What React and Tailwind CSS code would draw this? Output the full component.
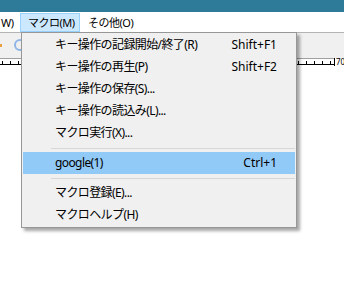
import React from "react";

const items = [
  { label: "キー操作の記録開始/終了(R)", key: "Shift+F1" },
  { label: "キー操作の再生(P)", key: "Shift+F2" },
  { label: "キー操作の保存(S)..." },
  { label: "キー操作の読込み(L)..." },
  { label: "マクロ実行(X)..." },
  { sep: true },
  { label: "google(1)", key: "Ctrl+1", active: true },
  { sep: true },
  { label: "マクロ登録(E)..." },
  { label: "マクロヘルプ(H)" },
];

const Ruler = () => {
  const ticks = [];
  for (let x = 2; x < 334; x += 8) ticks.push(x);
  return (
    <svg width="344" height="8" className="block">
      <line x1="0" y1="0.5" x2="344" y2="0.5" stroke="#a0a0a0" />
      <line x1="0" y1="6.5" x2="334" y2="6.5" stroke="#000" />
      {ticks.map((x) => (
        <line key={x} x1={x + 0.5} y1="3" x2={x + 0.5} y2="7" stroke="#000" />
      ))}
    </svg>
  );
};

export default function App() {
  return (
    <div
      className="relative w-[344px] h-[289px] bg-white overflow-hidden text-[12px] text-black"
      style={{ fontFamily: '"Noto Sans", "Noto Sans CJK JP", sans-serif' }}
    >
      {/* title bar strip */}
      <div className="h-[12px] bg-[#2d7a99]" />

      {/* menu bar */}
      <div className="h-[20px] flex items-center bg-white whitespace-nowrap text-[11px] tracking-[-0.5px]">
        <div className="pl-[1px] w-[20px] leading-none">W)</div>
        <div className="h-[19px] w-[60px] flex items-center pl-[7px] bg-[#cce8ff] border border-[#99d1ff] leading-none">
          マクロ(M)
        </div>
        <div className="pl-[8px] leading-none">その他(O)</div>
      </div>

      {/* toolbar */}
      <div className="relative h-[26px] bg-[#f0f0f0] border-t border-[#b4b4b4]">
        <div className="absolute left-[-2px] top-[11px] w-[4px] h-[3px] bg-[#e8a040]" />
        <div className="absolute left-[14px] top-[6px] w-[12px] h-[12px] rounded-full border-2 border-[#8fb6e6]" />
      </div>

      {/* ruler */}
      <div className="relative h-[8px] bg-white">
        <Ruler />
        <div className="absolute left-[334px] top-[0px] h-[8px] pl-[1px] border-l border-black text-[8px] leading-[8px] bg-white">
          70
        </div>
      </div>

      {/* dropdown menu */}
      <div className="absolute left-[21px] top-[32px] w-[276px] h-[196px] bg-[#f0f0f0] border border-[#979797] shadow-[3px_3px_3px_rgba(0,0,0,0.35)] pt-[1px]">
        {items.map((it, i) =>
          it.sep ? (
            <div key={i} className="h-[8px] flex items-center pl-[29px] pr-[1px]">
              <div className="w-full h-[1px] bg-[#d7d7d7]" />
            </div>
          ) : (
            <div
              key={i}
              className={`mx-[1px] h-[22px] flex items-center justify-between pl-[32px] pr-[18px] ${
                it.active ? "bg-[#91c9f7]" : ""
              }`}
            >
              <span className="whitespace-nowrap tracking-[-0.6px]">{it.label}</span>
              {it.key && <span className="whitespace-nowrap">{it.key}</span>}
            </div>
          )
        )}
      </div>
    </div>
  );
}
